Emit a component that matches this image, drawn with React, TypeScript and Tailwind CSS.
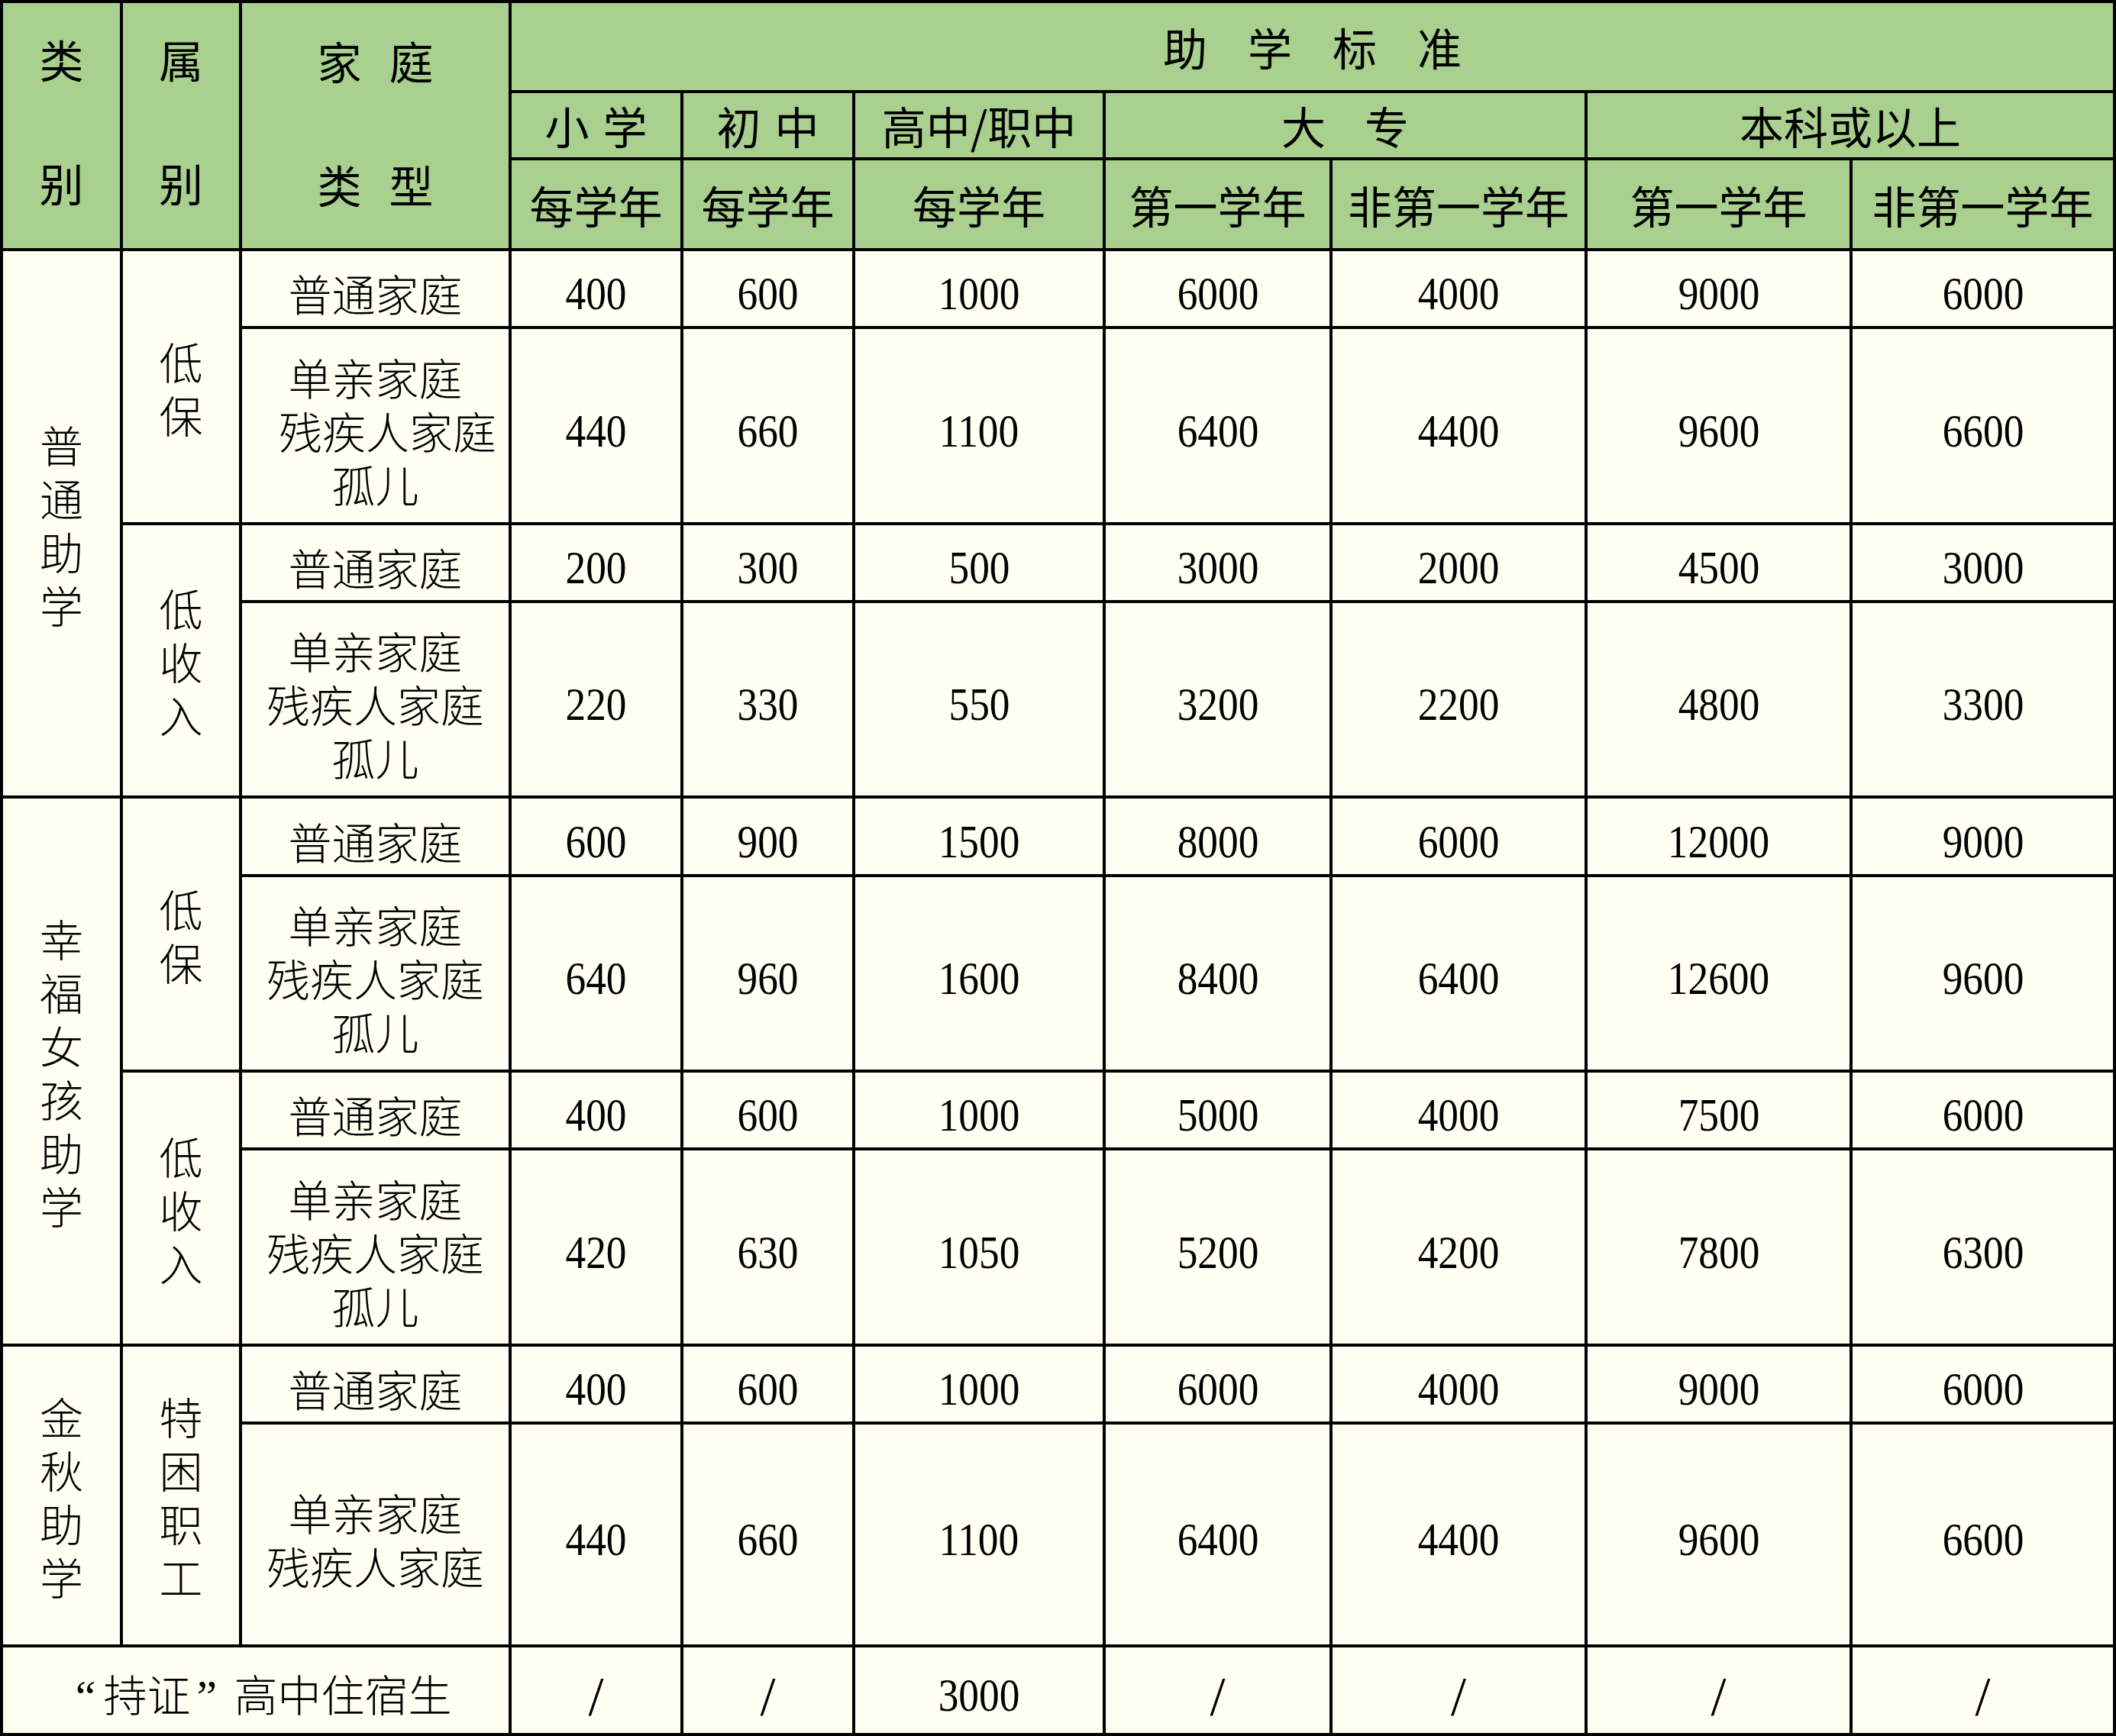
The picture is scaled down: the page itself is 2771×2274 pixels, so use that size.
import React from "react";

const head = "bg-[#a9d08e] flex items-center justify-center text-black font-['Noto_Sans_CJK_SC',sans-serif] text-[58px] leading-none whitespace-nowrap";
const body = "bg-[#fffff3] flex items-center justify-center text-black whitespace-nowrap";
const cjk = "font-['Noto_Sans_CJK_SC',sans-serif] font-light text-[57px]";

const groups = [
  {
    name: "普通助学",
    subs: [
      { name: "低保", rows: [["400", "600", "1000", "6000", "4000", "9000", "6000"], ["440", "660", "1100", "6400", "4400", "9600", "6600"]], shift: true },
      { name: "低收入", rows: [["200", "300", "500", "3000", "2000", "4500", "3000"], ["220", "330", "550", "3200", "2200", "4800", "3300"]] },
    ],
  },
  {
    name: "幸福女孩助学",
    subs: [
      { name: "低保", rows: [["600", "900", "1500", "8000", "6000", "12000", "9000"], ["640", "960", "1600", "8400", "6400", "12600", "9600"]] },
      { name: "低收入", rows: [["400", "600", "1000", "5000", "4000", "7500", "6000"], ["420", "630", "1050", "5200", "4200", "7800", "6300"]] },
    ],
  },
];

const Vertical = ({ text }: { text: string }) => (
  <div className={`flex flex-col items-center ${cjk}`}>
    {[...text].map((c, i) => (
      <span key={i} className="block h-[70px] leading-[70px]">{c}</span>
    ))}
  </div>
);

const Num = ({ v }: { v: string }) => (
  <div className={body}>
    {v === "/" ? (
      <span className="inline-block pt-[16px] font-['Liberation_Serif',serif] text-[72px] leading-none">/</span>
    ) : (
      <span className="inline-block pt-[12px] font-['Liberation_Serif',serif] text-[62px] leading-none scale-x-[0.86]">{v}</span>
    )}
  </div>
);

const Multi = ({ lines, shift }: { lines: string[]; shift?: boolean }) => (
  <div className={body}>
    <div className={`flex flex-col items-center pt-[10px] ${cjk}`}>
      {lines.map((l, i) => (
        <span key={i} className={`block h-[70px] leading-[70px] ${shift && i === 1 ? "ml-[32px]" : ""}`}>{l}</span>
      ))}
    </div>
  </div>
);

const Spaced = ({ chars, gap }: { chars: string; gap: string }) => (
  <div className={`flex ${gap}`}>
    {[...chars].map((c, i) => (
      <span key={i}>{c}</span>
    ))}
  </div>
);

export default function App() {
  return (
    <div className="w-[2771px] h-[2274px] bg-black p-[4px] grid gap-[4px] grid-cols-[153px_152px_349px_221px_221px_324px_293px_330px_343px_341px] grid-rows-[114px_84px_115px_98px_253px_98px_252px_99px_252px_98px_253px_98px_288px_112px]">
      {/* header */}
      <div className={`${head} row-span-3 flex-col gap-[104px] pb-[14px]`}>
        <span>类</span>
        <span>别</span>
      </div>
      <div className={`${head} row-span-3 flex-col gap-[104px] pb-[14px]`}>
        <span>属</span>
        <span>别</span>
      </div>
      <div className={`${head} row-span-3 flex-col gap-[104px] pb-[10px]`}>
        <Spaced chars="家庭" gap="gap-[36px]" />
        <Spaced chars="类型" gap="gap-[36px]" />
      </div>
      <div className={`${head} col-span-7`}>
        <Spaced chars="助学标准" gap="gap-[53px]" />
      </div>

      <div className={head}>
        <Spaced chars="小学" gap="gap-[18px]" />
      </div>
      <div className={head}>
        <Spaced chars="初中" gap="gap-[18px]" />
      </div>
      <div className={head}>高中/职中</div>
      <div className={`${head} col-span-2`}>
        <Spaced chars="大专" gap="gap-[51px]" />
      </div>
      <div className={`${head} col-span-2`}>本科或以上</div>

      <div className={head}>每学年</div>
      <div className={head}>每学年</div>
      <div className={head}>每学年</div>
      <div className={head}>第一学年</div>
      <div className={head}>非第一学年</div>
      <div className={head}>第一学年</div>
      <div className={head}>非第一学年</div>

      {/* body */}
      {groups.map((g) => (
        <React.Fragment key={g.name}>
          <div className={`${body} row-span-4`}>
            <Vertical text={g.name} />
          </div>
          {g.subs.map((s, si) => (
            <React.Fragment key={si}>
              <div className={`${body} row-span-2`}>
                <Vertical text={s.name} />
              </div>
              <Multi lines={["普通家庭"]} />
              {s.rows[0].map((v, i) => (
                <Num key={i} v={v} />
              ))}
              <Multi lines={["单亲家庭", "残疾人家庭", "孤儿"]} shift={s.shift} />
              {s.rows[1].map((v, i) => (
                <Num key={i} v={v} />
              ))}
            </React.Fragment>
          ))}
        </React.Fragment>
      ))}

      <div className={`${body} row-span-2`}>
        <Vertical text="金秋助学" />
      </div>
      <div className={`${body} row-span-2`}>
        <Vertical text="特困职工" />
      </div>
      <Multi lines={["普通家庭"]} />
      {["400", "600", "1000", "6000", "4000", "9000", "6000"].map((v, i) => (
        <Num key={i} v={v} />
      ))}
      <Multi lines={["单亲家庭", "残疾人家庭"]} />
      {["440", "660", "1100", "6400", "4400", "9600", "6600"].map((v, i) => (
        <Num key={i} v={v} />
      ))}

      <div className={`${body} col-span-3`}>
        <div className={`flex items-baseline pt-[12px] leading-none ${cjk}`}>
          <span className="w-[57px] pr-[10px] text-right font-['Liberation_Serif',serif] text-[60px]">“</span>
          <span>持证</span>
          <span className="w-[57px] pl-[8px] text-left font-['Liberation_Serif',serif] text-[60px]">”</span>
          <span>高中住宿生</span>
        </div>
      </div>
      {["/", "/", "3000", "/", "/", "/", "/"].map((v, i) => (
        <Num key={i} v={v} />
      ))}
    </div>
  );
}
